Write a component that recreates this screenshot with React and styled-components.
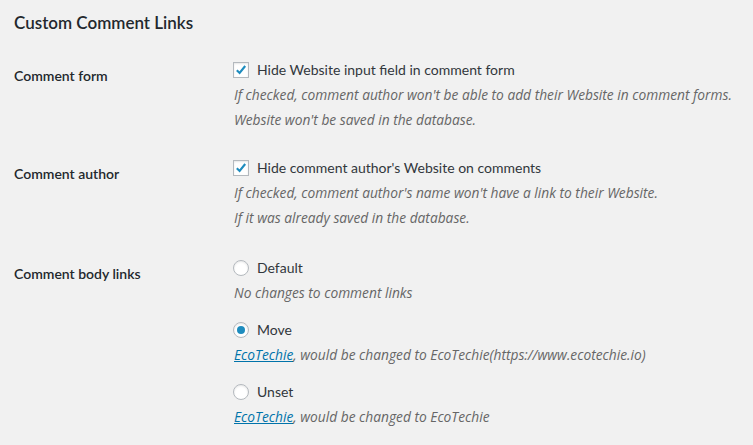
import React from 'react';
import styled, { createGlobalStyle } from 'styled-components';

const GlobalStyle = createGlobalStyle`
  html, body {
    margin: 0;
    padding: 0;
    background: #f1f1f1;
  }
  body {
    font-family: Lato, "Open Sans", sans-serif;
    font-size: 14px;
    color: #444;
  }
`;

const Wrap = styled.div`
  padding: 0 14px;
  width: 753px;
  height: 445px;
  box-sizing: border-box;
  overflow: hidden;
`;

const Title = styled.h2`
  margin: 0;
  padding: 11px 0 0;
  font-size: 17px;
  line-height: 23px;
  font-weight: 600;
  color: #23282d;
`;

const Row = styled.div`
  display: grid;
  grid-template-columns: 219px 1fr;
  padding-top: ${p => p.$top}px;
`;

const Label = styled.div`
  padding: 6px 10px 0 0;
  font-weight: 600;
  color: #23282d;
  line-height: 24px;
`;

const Field = styled.div`
  display: flex;
  flex-direction: column;
`;

const Option = styled.label`
  display: flex;
  align-items: center;
  gap: 8px;
  line-height: 24px;
  color: #32373c;
  margin-top: ${p => p.$gap || 0}px;
`;

const Box = styled.span`
  width: 16px;
  height: 16px;
  box-sizing: border-box;
  border: 1px solid #b4b9be;
  background: #fff;
  box-shadow: inset 0 1px 2px rgba(0, 0, 0, 0.1);
  display: inline-flex;
  align-items: center;
  justify-content: center;
  flex: none;
  border-radius: ${p => (p.$round ? '50%' : '0')};
`;

const Dot = styled.span`
  width: 8px;
  height: 8px;
  border-radius: 50%;
  background: #1e8cbe;
`;

const Description = styled.p`
  margin: 0;
  padding-left: 1px;
  font-family: "Open Sans", Lato, sans-serif;
  font-size: 13.75px;
  font-style: italic;
  line-height: 25px;
  color: #666;
`;

const Link = styled.a`
  color: #0073aa;
  text-decoration: underline;
`;

const Check = () => (
  <Box>
    <svg width="16" height="16" viewBox="0 0 16 16">
      <path d="M3.2 8.2 L6.4 11.4 L12.8 3.4" fill="none" stroke="#1e8cbe" strokeWidth="2.4" />
    </svg>
  </Box>
);

const Radio = ({ checked }) => <Box $round>{checked && <Dot />}</Box>;

const App = () => (
  <Wrap>
    <GlobalStyle />
    <Title>Custom Comment Links</Title>

    <Row $top={24}>
      <Label>Comment form</Label>
      <Field>
        <Option>
          <Check />
          Hide Website input field in comment form
        </Option>
        <Description>If checked, comment author won't be able to add their Website in comment forms.</Description>
        <Description>Website won't be saved in the database.</Description>
      </Field>
    </Row>

    <Row $top={24}>
      <Label>Comment author</Label>
      <Field>
        <Option>
          <Check />
          Hide comment author's Website on comments
        </Option>
        <Description>If checked, comment author's name won't have a link to their Website.</Description>
        <Description>If it was already saved in the database.</Description>
      </Field>
    </Row>

    <Row $top={26}>
      <Label>Comment body links</Label>
      <Field>
        <Option>
          <Radio />
          Default
        </Option>
        <Description>No changes to comment links</Description>
        <Option $gap={13}>
          <Radio checked />
          Move
        </Option>
        <Description>
          <Link href="#">EcoTechie</Link>, would be changed to EcoTechie(https://www.ecotechie.io)
        </Description>
        <Option $gap={13}>
          <Radio />
          Unset
        </Option>
        <Description>
          <Link href="#">EcoTechie</Link>, would be changed to EcoTechie
        </Description>
      </Field>
    </Row>
  </Wrap>
);

export default App;
